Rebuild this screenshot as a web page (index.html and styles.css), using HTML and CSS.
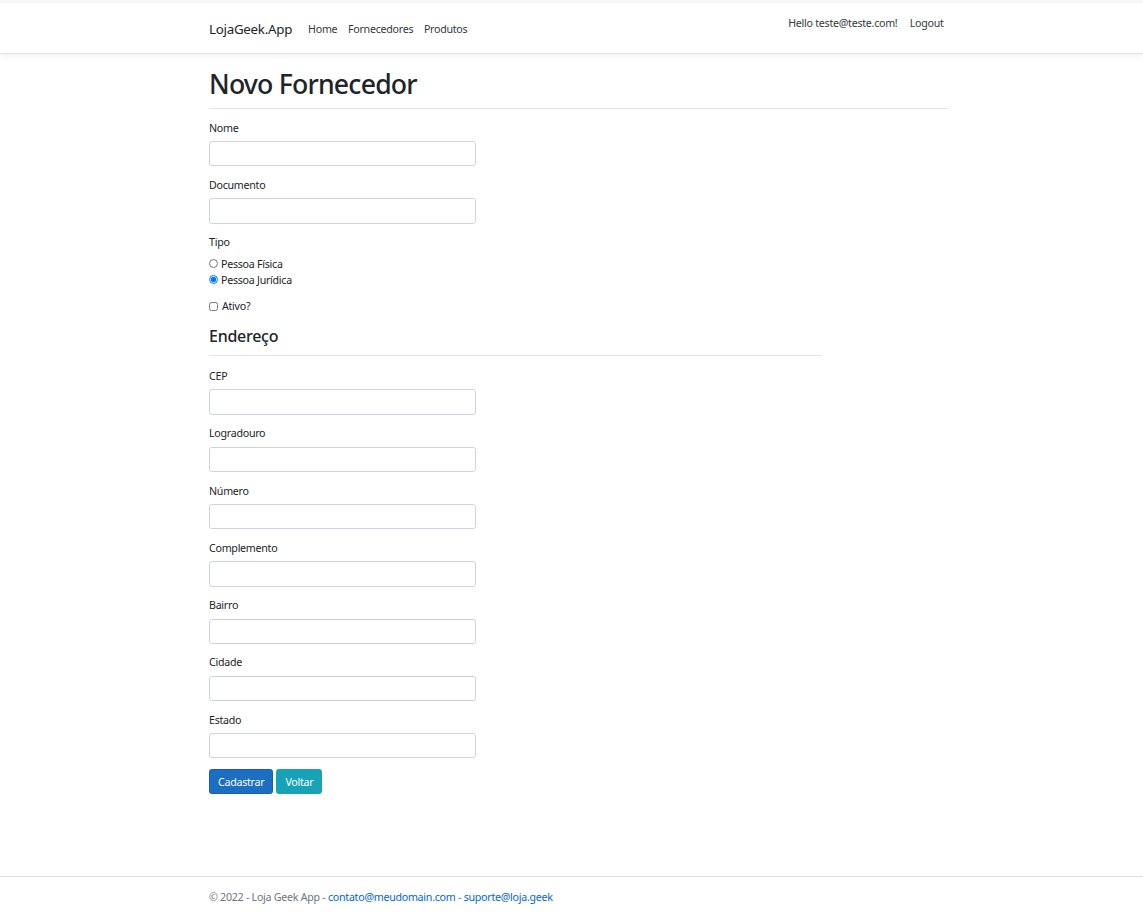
FILE: index.html
```html
<!DOCTYPE html>
<html lang="pt-br">
<head>
<meta charset="utf-8">
<title>Novo Fornecedor - LojaGeek.App</title>
<link rel="stylesheet" href="styles.css">
</head>
<body>
<header class="topbar">
  <nav class="navbar">
    <div class="container nav-inner">
      <a class="brand" href="#">LojaGeek.App</a>
      <ul class="nav-links">
        <li><a class="nav-link" href="#">Home</a></li>
        <li><a class="nav-link" href="#">Fornecedores</a></li>
        <li><a class="nav-link" href="#">Produtos</a></li>
      </ul>
      <ul class="nav-right">
        <li><a class="nav-link" href="#">Hello teste@teste.com!</a></li>
        <li><button class="nav-link logout" type="button">Logout</button></li>
      </ul>
    </div>
  </nav>
</header>

<main class="container main">
  <h1 class="title">Novo Fornecedor</h1>
  <hr class="rule">
  <form class="form">
    <div class="form-group">
      <label class="label">Nome</label>
      <input class="control" type="text">
    </div>
    <div class="form-group">
      <label class="label">Documento</label>
      <input class="control" type="text">
    </div>
    <div class="form-group">
      <label class="label">Tipo</label>
      <div class="check"><input class="radio" type="radio" name="tipo"><span>Pessoa Física</span></div>
      <div class="check"><input class="radio" type="radio" name="tipo" checked><span>Pessoa Jurídica</span></div>
    </div>
    <div class="form-group">
      <div class="check"><input class="box" type="checkbox"><span class="box-label">Ativo?</span></div>
    </div>

    <h4 class="subtitle">Endereço</h4>
    <hr class="rule short">

    <div class="form-group">
      <label class="label">CEP</label>
      <input class="control" type="text">
    </div>
    <div class="form-group">
      <label class="label">Logradouro</label>
      <input class="control" type="text">
    </div>
    <div class="form-group">
      <label class="label">Número</label>
      <input class="control" type="text">
    </div>
    <div class="form-group">
      <label class="label">Complemento</label>
      <input class="control" type="text">
    </div>
    <div class="form-group">
      <label class="label">Bairro</label>
      <input class="control" type="text">
    </div>
    <div class="form-group">
      <label class="label">Cidade</label>
      <input class="control" type="text">
    </div>
    <div class="form-group">
      <label class="label">Estado</label>
      <input class="control" type="text">
    </div>
    <div class="actions">
      <button class="btn btn-primary" type="button">Cadastrar</button>
      <a class="btn btn-info" href="#">Voltar</a>
    </div>
  </form>
</main>

<footer class="footer">
  <div class="container footer-inner">
    © 2022 - Loja Geek App - <a href="#">contato@meudomain.com</a> - <a href="#">suporte@loja.geek</a>
  </div>
</footer>
</body>
</html>
```

FILE: styles.css
```css
* { box-sizing: border-box; }
html, body { margin: 0; padding: 0; height: 100%; }
body {
  font-family: "Noto Sans", "Open Sans", sans-serif;
  font-size: 10.67px;
  line-height: 16px;
  letter-spacing: -0.025em;
  color: #212529;
  background: #fff;
  position: relative;
  min-height: 917px;
}
a { text-decoration: none; }
.container { width: 740px; margin: 0 0 0 209px; }

.topbar { border-top: 3px solid #f8f8f8; }
.navbar {
  height: 51px;
  background: #fff;
  border-bottom: 1px solid #dee2e6;
  box-shadow: 0 3px 8px rgba(0,0,0,0.05);
}
.nav-inner { display: flex; align-items: center; height: 50px; }
.brand { font-size: 13.33px; color: #212529; margin-right: 10.67px; line-height: 20px; margin-top: 2px; }
.nav-links, .nav-right { list-style: none; margin: 0; padding: 0; display: flex; }
.nav-links { flex: 1; margin-top: 2px; }
.nav-right { align-self: flex-start; margin-top: 7px; }
.nav-link {
  display: block;
  padding: 5.33px;
  color: #343a40;
  font: inherit;
  letter-spacing: inherit;
  background: none;
  border: 0;
  line-height: 16px;
}
.logout { padding-left: 7px; cursor: pointer; }

.main { padding-top: 14px; padding-bottom: 70px; }
.title { font-size: 26.67px; font-weight: 500; line-height: 32px; margin: 0 0 8px; letter-spacing: -0.03em; }
.rule { border: 0; border-top: 1px solid rgba(0,0,0,0.1); margin: 5px 0 10.67px; height: 0; }
.rule.short { width: 613px; margin-top: 9px; margin-bottom: 12px; }

.form-group { margin-bottom: 10.67px; }
.label { display: block; margin-bottom: 5.33px; }
.control {
  display: block;
  width: 267px;
  height: 25.33px;
  border: 1px solid #ced4da;
  border-radius: 2.67px;
  padding: 4px 8px;
  font: inherit;
  background: #fff;
}
.check { display: flex; align-items: center; height: 16px; }
.radio { margin: 0 3px 0 0; width: 9px; height: 9px; }
.box { margin: 0 4px 0 0; width: 9px; height: 9px; }
.box-label { padding-left: 0; }

.subtitle { font-size: 16px; font-weight: 500; line-height: 19px; margin: 0; padding-top: 2px; }

.actions { display: flex; gap: 3px; }
.btn {
  display: inline-block;
  height: 25.33px;
  padding: 4px 8px;
  font: inherit;
  letter-spacing: inherit;
  line-height: 16px;
  color: #fff;
  border: 1px solid transparent;
  border-radius: 2.67px;
}
.btn-primary { background: #1b6ec2; border-color: #1861ac; }
.btn-info { background: #17a2b8; border-color: #17a2b8; }

.footer {
  position: absolute;
  left: 0; right: 0; bottom: 0;
  height: 41px;
  border-top: 1px solid #dee2e6;
  color: #6c757d;
  line-height: 40px;
}
.footer a { color: #0366d6; }
```
